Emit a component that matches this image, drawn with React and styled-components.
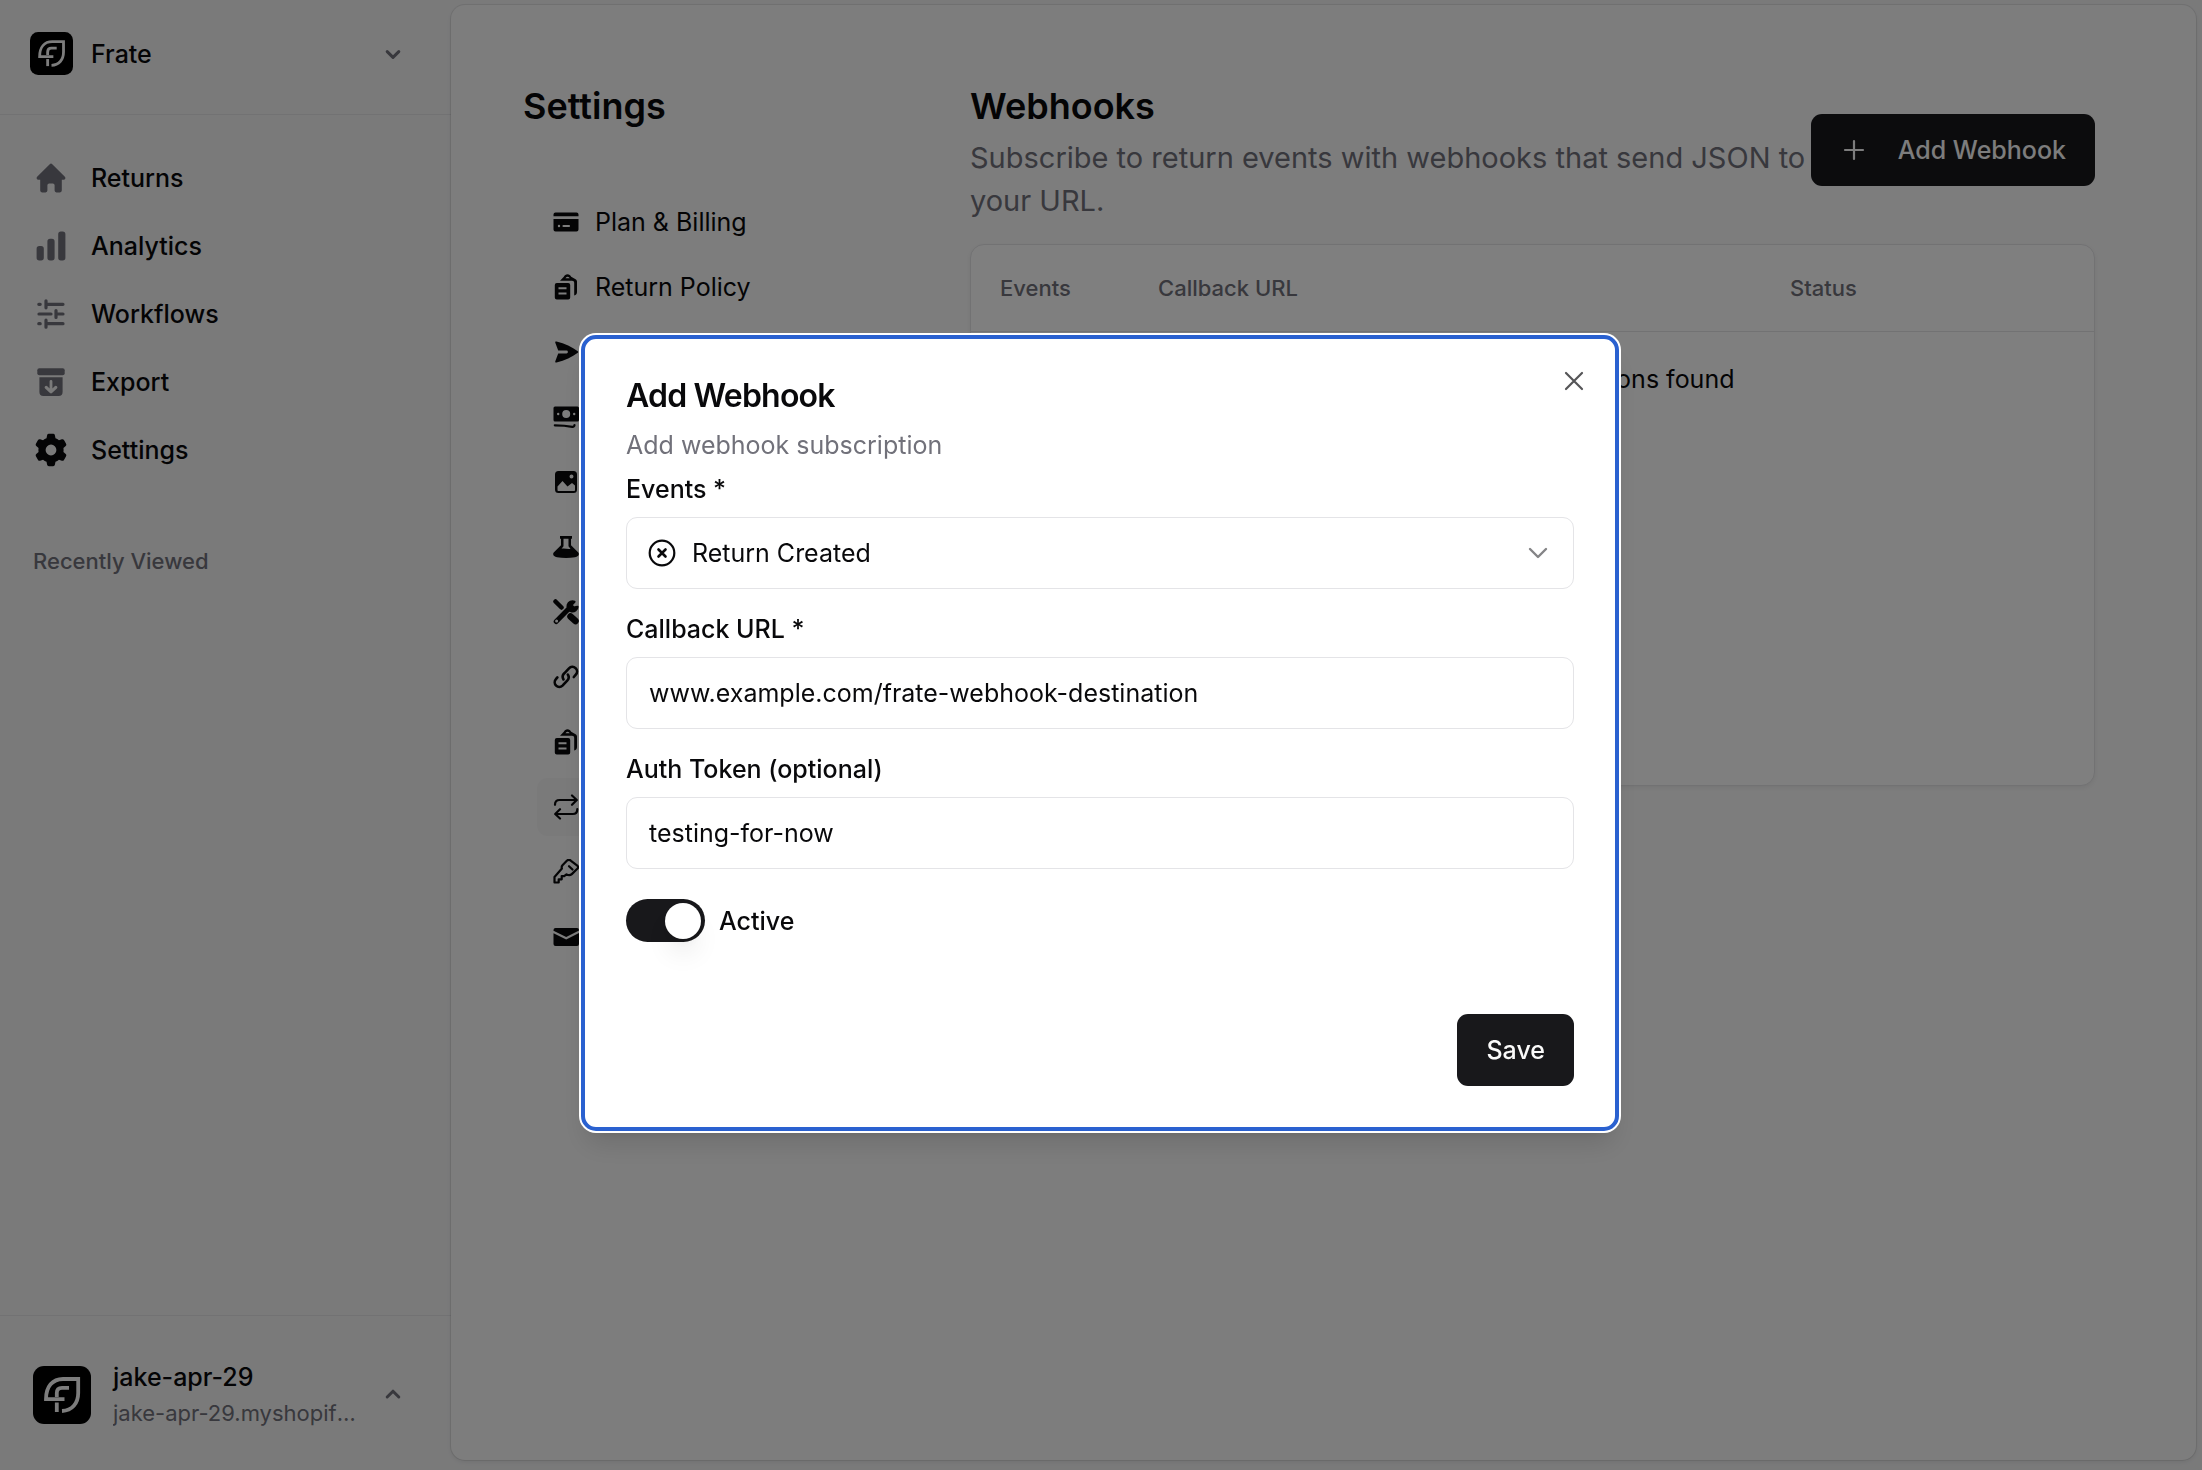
import React, { useState } from "react";
import styled, { createGlobalStyle, css } from "styled-components";
import { HiMiniHome, HiMiniChartBar, HiMiniCog6Tooth } from "react-icons/hi2";

const color = {
  page: "#f4f4f5",
  panel: "#fafafa",
  card: "#ffffff",
  ink: "#09090b",
  muted: "#71717a",
  line: "#e4e4e7",
  primary: "#18181b",
  focus: "#2a61d0",
};

const size = { sm: "22px", base: "25px", lg: "29px", title: "32px", xl: "36px" };

const GlobalStyle = createGlobalStyle`
  *, *::before, *::after { box-sizing: border-box; }
  body {
    margin: 0;
    background: ${color.page};
    color: ${color.ink};
    font-family: Inter, "Liberation Sans", sans-serif;
    font-size: ${size.base};
    line-height: 36px;
  }
  h1, h2, p, ul { margin: 0; padding: 0; }
  ul { list-style: none; }
  button, input, select { font: inherit; color: inherit; }
  svg { display: block; flex: none; }
`;

/* ---------- layout ---------- */

const Page = styled.div`
  display: flex;
  min-height: 100vh;
`;

const Sidebar = styled.aside`
  flex: none;
  width: 451px;
  display: flex;
  flex-direction: column;
`;

const Panel = styled.main`
  flex: 1;
  min-width: 0;
  display: flex;
  margin: 5px 6px 10px 0;
  padding: 73px 101px 73px 72px;
  background: ${color.panel};
  border-radius: 14px;
  box-shadow: 0 0 0 1px rgba(9, 9, 11, 0.08), 0 2px 4px rgba(0, 0, 0, 0.08);
`;

/* ---------- sidebar ---------- */

const SwitcherButton = styled.button`
  display: flex;
  align-items: center;
  gap: ${(p) => p.$gap};
  width: 100%;
  padding: ${(p) => p.$padding};
  border: 0;
  border-${(p) => p.$edge}: 1px solid ${color.line};
  background: none;
  font-weight: 500;
  text-align: left;

  > svg:last-child { color: ${color.muted}; }
`;

const SwitcherLabel = styled.span`
  flex: 1;
  min-width: 0;
`;

const ShopText = styled.span`
  flex: 1;
  min-width: 0;
  display: grid;
`;

const ShopDomain = styled.span`
  overflow: hidden;
  text-overflow: ellipsis;
  white-space: nowrap;
  color: ${color.muted};
  font-size: ${size.sm};
  font-weight: 400;
`;

const MainNav = styled.nav`
  flex: 1;
  padding: 30px 33px;
`;

const MainNavList = styled.ul`
  display: grid;
  gap: 3px;
`;

const MainNavLink = styled.a`
  display: flex;
  align-items: center;
  gap: 22px;
  height: 65px;
  color: inherit;
  font-weight: 500;
  text-decoration: none;

  svg {
    width: 36px;
    height: 36px;
    color: ${(p) => (p.$current ? color.ink : color.muted)};
  }
`;

const SectionLabel = styled.h2`
  margin-top: 61px;
  color: ${color.muted};
  font-size: ${size.sm};
  font-weight: 500;
`;

/* ---------- settings ---------- */

const SettingsColumn = styled.div`
  flex: none;
  width: 447px;
`;

const Heading = styled.h1`
  font-size: ${size.xl};
  font-weight: 600;
  line-height: 56px;
`;

const SettingsList = styled.ul`
  display: grid;
  gap: 7px;
  margin: 59px 32px 0 14px;
`;

const SettingsLink = styled.a`
  display: flex;
  align-items: center;
  gap: 16px;
  height: 58px;
  padding: 0 16px;
  border-radius: 11px;
  background: ${(p) => (p.$current ? color.page : "transparent")};
  color: inherit;
  text-decoration: none;
`;

const Content = styled.section`
  flex: 1;
  min-width: 0;
`;

const ContentHeader = styled.header`
  display: flex;
  align-items: center;
  justify-content: space-between;
  margin-bottom: 22px;
`;

const Lead = styled.p`
  margin-top: 2px;
  color: ${color.muted};
  font-size: ${size.lg};
  line-height: 43px;
`;

const Button = styled.button`
  flex: none;
  display: inline-flex;
  align-items: center;
  gap: 30px;
  height: 72px;
  padding: 0 29px;
  border: 0;
  border-radius: 11px;
  background: ${color.primary};
  color: #fafafa;
  font-weight: 500;
`;

const Card = styled.div`
  min-height: 542px;
  border: 1px solid ${color.line};
  border-radius: 14px;
  background: ${color.card};
  box-shadow: 0 2px 4px rgba(0, 0, 0, 0.06);
`;

const Table = styled.table`
  width: 100%;
  table-layout: fixed;
  border-collapse: collapse;
`;

const HeadCell = styled.th`
  width: ${(p) => p.$width || "auto"};
  height: 86px;
  padding: 0 29px;
  border-bottom: 1px solid ${color.line};
  color: ${color.muted};
  font-size: ${size.sm};
  font-weight: 500;
  text-align: left;
`;

const EmptyCell = styled.td`
  padding: 29px;
  text-align: center;
`;

/* ---------- dialog ---------- */

const Overlay = styled.div`
  position: fixed;
  inset: 0;
  display: grid;
  place-items: center;
  padding: 0 2px 4px 0;
  background: rgba(0, 0, 0, 0.5);
`;

const Dialog = styled.form`
  position: relative;
  width: 1038px;
  max-width: 100%;
  padding: 41px;
  border: 4px solid ${color.focus};
  border-radius: 15px;
  background: ${color.card};
  box-shadow: 0 0 0 2px #fff, 0 18px 27px -5px rgba(0, 0, 0, 0.12),
    0 7px 11px -7px rgba(0, 0, 0, 0.12);
`;

const DialogTitle = styled.h2`
  font-size: ${size.title};
  font-weight: 600;
  line-height: 32px;
  letter-spacing: -0.025em;
`;

const DialogText = styled.p`
  margin: 15px 0 8px;
  color: ${color.muted};
`;

const CloseButton = styled.button`
  position: absolute;
  top: 28px;
  right: 27px;
  padding: 0;
  border: 0;
  background: none;
  color: #555557;
`;

const Fields = styled.div`
  display: grid;
  gap: 22px;
`;

const Field = styled.div`
  display: grid;
  gap: 10px;
`;

const Label = styled.label`
  font-weight: 500;
`;

const controlStyle = css`
  width: 100%;
  height: 72px;
  padding: 0 22px;
  border: 1px solid ${color.line};
  border-radius: 11px;
  background: transparent;
  outline: none;
`;

const Input = styled.input`
  ${controlStyle}
`;

const SelectWrap = styled.div`
  position: relative;

  svg {
    position: absolute;
    top: 22px;
    pointer-events: none;
  }
  svg:first-child { left: 22px; }
  svg:last-child { right: 22px; color: #848486; }
`;

const Select = styled.select`
  ${controlStyle}
  padding-left: 65px;
  appearance: none;
`;

const SwitchRow = styled.div`
  display: flex;
  align-items: center;
  gap: 14px;
  height: 43px;
  margin-top: 8px;
`;

const Switch = styled.input`
  appearance: none;
  flex: none;
  display: flex;
  align-items: center;
  justify-content: ${(p) => (p.checked ? "flex-end" : "flex-start")};
  width: 79px;
  height: 43px;
  margin: 0;
  padding: 0 4px;
  border-radius: 22px;
  background: ${(p) => (p.checked ? color.primary : color.line)};

  &::before {
    content: "";
    width: 36px;
    height: 36px;
    border-radius: 50%;
    background: #fff;
    box-shadow: 0 18px 27px -5px rgba(0, 0, 0, 0.1),
      0 7px 11px -7px rgba(0, 0, 0, 0.1);
  }
`;

const DialogFooter = styled.div`
  display: flex;
  justify-content: flex-end;
  margin-top: 72px;
`;

/* ---------- icons ---------- */

function Logo({ width }) {
  return (
    <svg width={width} height={width} viewBox="0 0 58 58" fill="none" aria-hidden="true">
      <rect width="58" height="58" rx="11" fill="#000" />
      <g stroke="#fafafa" strokeWidth="3.8">
        <path d="M29 45C39 44.5 45.2 37.5 45.2 27V13H30C19.5 13 13 20.5 13 33.2H31.5" />
        <path d="M36 21.8H29C25.5 21.8 23.8 23.5 23.8 27V31" />
        <path d="M23.8 36.5V46" />
      </g>
    </svg>
  );
}

const SlidersIcon = () => (
  <svg
    viewBox="0 0 36 36"
    fill="none"
    stroke="currentColor"
    strokeWidth="3.2"
    strokeLinecap="round"
    aria-hidden="true"
  >
    <path d="M5.800 8.300H7.200M13 4.800V11.800M13 8.300H30" />
    <path d="M6 18H18M23 14.500V21.500M23 18H30" />
    <path d="M5.800 27.700H7.200M13 24.200V31.200M13 27.700H30" />
  </svg>
);

const ArchiveIcon = () => (
  <svg viewBox="0 0 36 36" fill="currentColor" aria-hidden="true">
    <rect x="4.300" y="4.200" width="27.400" height="7" rx="2" />
    <path
      fillRule="evenodd"
      d="M6.400 13.200H29.600V28a4 4 0 0 1-4 4H10.400a4 4 0 0 1-4-4zM16.600 17.500v7l-2.300-2.300a1.500 1.500 0 0 0-2.200 2.200l4.900 4.700a1.500 1.500 0 0 0 2 0l4.900-4.700a1.500 1.500 0 0 0-2.200-2.200l-2.300 2.300v-7a1.400 1.400 0 0 0-2.800 0z"
    />
  </svg>
);

function Glyph({ children, fill = "currentColor", stroke = "none" }) {
  return (
    <svg
      width="26"
      height="26"
      viewBox="0 0 26 26"
      fill={fill}
      stroke={stroke}
      strokeWidth="2.2"
      strokeLinecap="round"
      strokeLinejoin="round"
      aria-hidden="true"
    >
      {children}
    </svg>
  );
}

const CardIcon = () => (
  <Glyph>
    <path d="M2.500 3.500h21A2 2 0 0 1 25.500 5.500V7.300H.5V5.500a2 2 0 0 1 2-2z" />
    <path
      fillRule="evenodd"
      d="M.5 10h25v10.500a2 2 0 0 1-2 2h-21a2 2 0 0 1-2-2zM6 15.800a1.200 1.200 0 1 0 0 2.400 1.200 1.200 0 0 0 0-2.400zm4.500.1a1.100 1.100 0 0 0 0 2.200h5.500a1.100 1.100 0 0 0 0-2.200z"
    />
  </Glyph>
);

const ClipboardIcon = () => (
  <Glyph>
    <path
      fillRule="evenodd"
      d="M3.800 9h11.400a2 2 0 0 1 2 2v12.500a2 2 0 0 1-2 2H3.800a2 2 0 0 1-2-2V11a2 2 0 0 1 2-2zm1.700 4.300v1.900h8v-1.900zm0 5.200v1.900h8v-1.900z"
    />
    <path
      fillRule="evenodd"
      d="M7 6.800L10.800 2.800C11.500 1.200 12.800.3 14.500.3s3 .9 3.700 2.500L23 5.500c.7.600 1 1.200 1 2V18c0 1.800-.8 3-2.800 3.400V9c0-1.500-.8-2.200-2.200-2.200zm5.500-2.600h4.200a2.200 2.200 0 0 0-4.200 0z"
    />
  </Glyph>
);

const SendIcon = () => (
  <Glyph>
    <path d="M3.500 2.600C2.600 2.300 2 2.900 2.300 3.800L5.200 11.600H13.500a1.400 1.400 0 0 1 0 2.800H5.200L2.300 22.200c-.3.900.3 1.500 1.200 1.200C12 21.500 19 18 24.800 13.700a.9.900 0 0 0 0-1.400C19 8 12 4.500 3.500 2.600z" />
  </Glyph>
);

const CashIcon = () => (
  <Glyph>
    <path
      fillRule="evenodd"
      d="M2 2.500h22.500A1.500 1.500 0 0 1 26 4v12a1.500 1.500 0 0 1-1.500 1.500H2A1.500 1.500 0 0 1 .5 16V4A1.500 1.500 0 0 1 2 2.500zM13.200 6a4 4 0 1 0 0 8 4 4 0 0 0 0-8zM5.200 8.800a1.200 1.200 0 1 0 0 2.400 1.200 1.200 0 0 0 0-2.400zm16 0a1.200 1.200 0 1 0 0 2.400 1.200 1.200 0 0 0 0-2.400z"
    />
    <path d="M1.800 21.300c7 0 12 .4 17.500 1.500 1.200.2 2.200-.6 2.200-1.800" fill="none" stroke="currentColor" strokeWidth="2.200" />
  </Glyph>
);

const ImageIcon = () => (
  <Glyph>
    <path
      fillRule="evenodd"
      d="M5.500 2h15a3.500 3.500 0 0 1 3.500 3.500v15a3.500 3.500 0 0 1-3.500 3.500h-15A3.500 3.500 0 0 1 2 20.500v-15A3.500 3.500 0 0 1 5.500 2zm13 3.500a2 2 0 1 0 0 4 2 2 0 0 0 0-4zM4.500 17.500v3.500c0 .6.400 1 1 1h15.500c.6 0 1-.4 1-1v-4.500l-3-2.500-4.500 3.500L9.500 12z"
    />
  </Glyph>
);

const FlaskIcon = () => (
  <Glyph>
    <path
      fillRule="evenodd"
      d="M7 2h12v2.800h-1v6.500l7.300 7.200c1.500 2-.2 4.500-3.300 4.800-6 .9-12 .9-18 0C.9 23 -.8 20.500.7 18.500L8 11.300V4.800H7zm3.500 2.800v7.500L8.500 14.800c3-1 6 .8 9 0l-2-2.500V4.800z"
    />
  </Glyph>
);

const ToolsIcon = () => (
  <Glyph fill="none" stroke="currentColor">
    <path d="M2.500 2.500L8.500 8.500" strokeWidth="4.500" />
    <path d="M3.200 22.500L14.500 11" strokeWidth="5" />
    <path d="M21.500 2.800a5 5 0 1 0 3 5L20.500 8.500 18.500 6z" fill="currentColor" />
    <path d="M17.500 17.500L22.500 22" strokeWidth="6.500" />
    <circle cx="3.600" cy="22" r=".8" stroke="#fafafa" strokeWidth="1.400" />
  </Glyph>
);

const LinkIcon = () => (
  <Glyph fill="none" stroke="currentColor">
    <g strokeWidth="2.600">
      <path d="M10.500 15.500a5 5 0 0 1 .8-6.200l4.700-4.900a4.600 4.600 0 0 1 6.800 6.300l-2 2.300" />
      <path d="M14.800 10.500a5 5 0 0 1-.6 6.200l-4.700 4.900a4.600 4.600 0 0 1-6.600-6.400l1.500-1.800" />
    </g>
  </Glyph>
);

const RepeatIcon = () => (
  <Glyph fill="none" stroke="currentColor">
    <path d="M2 10.800c0-3 1.500-4.800 4.500-4.800h17M19 1.500L23.800 6 19 10.800" />
    <path d="M24.300 15.200c0 3-1.500 4.800-4.500 4.800H2.500M7 15.200L2.200 20 7 24.500" />
  </Glyph>
);

const KeyIcon = () => (
  <Glyph fill="none" stroke="currentColor">
    <path d="M13.800 1.800L9.500 6.300c-.9 1-1 2.200-.6 3.300L1.500 18v5.500h4.200v-3.200h3v-3.200h2.500l2.300-1.800c1.800 1.200 3.800 1.200 5.300-.2l5.500-5.300c1-1 1-2.300 0-3.200L18 1.800c-1.200-1.200-3-1.200-4.200 0z" />
    <path d="M16 7.200l3.500 3.300" />
  </Glyph>
);

const MailIcon = () => (
  <Glyph>
    <path d="M2.500 4h21.500a2 2 0 0 1 2 2v.5L13.200 13 .5 6.800V6a2 2 0 0 1 2-2z" />
    <path d="M.5 9.200l12.700 6.200L26 9v11a2 2 0 0 1-2 2H2.500a2 2 0 0 1-2-2z" />
  </Glyph>
);

function StrokeIcon({ d, width = 28, strokeWidth = 2.2 }) {
  return (
    <svg
      width={width}
      height={width}
      viewBox="0 0 28 28"
      fill="none"
      stroke="currentColor"
      strokeWidth={strokeWidth}
      strokeLinecap="round"
      strokeLinejoin="round"
      aria-hidden="true"
    >
      <path d={d} />
    </svg>
  );
}

function CircleXIcon() {
  return (
    <svg width="28" height="28" viewBox="0 0 28 28" fill="none" stroke="currentColor" strokeLinecap="round" aria-hidden="true">
      <circle cx="14" cy="14" r="12.300" strokeWidth="2.200" />
      <path d="M10.500 10.500l7 7M17.500 10.500l-7 7" strokeWidth="2.600" />
    </svg>
  );
}

/* ---------- content ---------- */

const mainNav = [
  { label: "Returns", Icon: HiMiniHome },
  { label: "Analytics", Icon: HiMiniChartBar },
  { label: "Workflows", Icon: SlidersIcon },
  { label: "Export", Icon: ArchiveIcon },
  { label: "Settings", Icon: HiMiniCog6Tooth, current: true },
];

const settingsNav = [
  { label: "Plan & Billing", Icon: CardIcon },
  { label: "Return Policy", Icon: ClipboardIcon },
  { label: "Shipping", Icon: SendIcon },
  { label: "Refunds", Icon: CashIcon },
  { label: "Branding", Icon: ImageIcon },
  { label: "Experiments", Icon: FlaskIcon },
  { label: "Tools", Icon: ToolsIcon },
  { label: "Links", Icon: LinkIcon },
  { label: "Rules", Icon: ClipboardIcon },
  { label: "Webhooks", Icon: RepeatIcon, current: true },
  { label: "API Keys", Icon: KeyIcon },
  { label: "Emails", Icon: MailIcon },
];

export default function App() {
  const [url, setUrl] = useState("www.example.com/frate-webhook-destination");
  const [token, setToken] = useState("testing-for-now");
  const [active, setActive] = useState(true);

  return (
    <>
      <GlobalStyle />
      <Page>
        <Sidebar>
          <SwitcherButton type="button" $gap="18px" $padding="32px 44px 39px 30px" $edge="bottom">
            <Logo width={43} />
            <SwitcherLabel>Frate</SwitcherLabel>
            <StrokeIcon d="M8.2 11.6l5.8 5.8 5.8-5.8" strokeWidth={3} />
          </SwitcherButton>
          <MainNav aria-label="Main">
            <MainNavList>
              {mainNav.map(({ label, Icon, current }) => (
                <li key={label}>
                  <MainNavLink href="#" $current={current}>
                    <Icon />
                    {label}
                  </MainNavLink>
                </li>
              ))}
            </MainNavList>
            <SectionLabel>Recently Viewed</SectionLabel>
          </MainNav>
          <SwitcherButton type="button" $gap="22px" $padding="43px 44px 39px 33px" $edge="top">
            <Logo width={58} />
            <ShopText>
              <span>jake-apr-29</span>
              <ShopDomain>jake-apr-29.myshopify.com</ShopDomain>
            </ShopText>
            <StrokeIcon d="M8.2 16l5.800-5.800 5.800 5.800" strokeWidth={3} />
          </SwitcherButton>
        </Sidebar>

        <Panel>
          <SettingsColumn>
            <Heading>Settings</Heading>
            <nav aria-label="Settings">
              <SettingsList>
                {settingsNav.map(({ label, Icon, current }) => (
                  <li key={label}>
                    <SettingsLink href="#" $current={current}>
                      <Icon />
                      {label}
                    </SettingsLink>
                  </li>
                ))}
              </SettingsList>
            </nav>
          </SettingsColumn>

          <Content>
            <ContentHeader>
              <div>
                <Heading as="h2">Webhooks</Heading>
                <Lead>Subscribe to return events with webhooks that send JSON to your URL.</Lead>
              </div>
              <Button type="button">
                <StrokeIcon d="M14 5v18M5 14h18" />
                Add Webhook
              </Button>
            </ContentHeader>
            <Card>
              <Table>
                <thead>
                  <tr>
                    <HeadCell $width="158px">Events</HeadCell>
                    <HeadCell>Callback URL</HeadCell>
                    <HeadCell $width="333px">Status</HeadCell>
                  </tr>
                </thead>
                <tbody>
                  <tr>
                    <EmptyCell colSpan={3}>No webhooks subscriptions found</EmptyCell>
                  </tr>
                </tbody>
              </Table>
            </Card>
          </Content>
        </Panel>
      </Page>

      <Overlay>
        <Dialog
          role="dialog"
          aria-modal="true"
          aria-labelledby="dialog-title"
          onSubmit={(e) => e.preventDefault()}
        >
          <DialogTitle id="dialog-title">Add Webhook</DialogTitle>
          <DialogText>Add webhook subscription</DialogText>
          <CloseButton type="button" aria-label="Close">
            <StrokeIcon d="M6 6l16 16M22 6L6 22" />
          </CloseButton>
          <Fields>
            <Field>
              <Label htmlFor="events">Events *</Label>
              <SelectWrap>
                <CircleXIcon />
                <Select id="events" defaultValue="created">
                  <option value="created">Return Created</option>
                </Select>
                <StrokeIcon d="M6 10l8 8 8-8" strokeWidth={2.4} />
              </SelectWrap>
            </Field>
            <Field>
              <Label htmlFor="callback">Callback URL *</Label>
              <Input id="callback" value={url} onChange={(e) => setUrl(e.target.value)} />
            </Field>
            <Field>
              <Label htmlFor="token">Auth Token (optional)</Label>
              <Input id="token" value={token} onChange={(e) => setToken(e.target.value)} />
            </Field>
            <SwitchRow>
              <Switch
                id="active"
                type="checkbox"
                role="switch"
                checked={active}
                onChange={(e) => setActive(e.target.checked)}
              />
              <Label htmlFor="active">Active</Label>
            </SwitchRow>
          </Fields>
          <DialogFooter>
            <Button type="submit">Save</Button>
          </DialogFooter>
        </Dialog>
      </Overlay>
    </>
  );
}
